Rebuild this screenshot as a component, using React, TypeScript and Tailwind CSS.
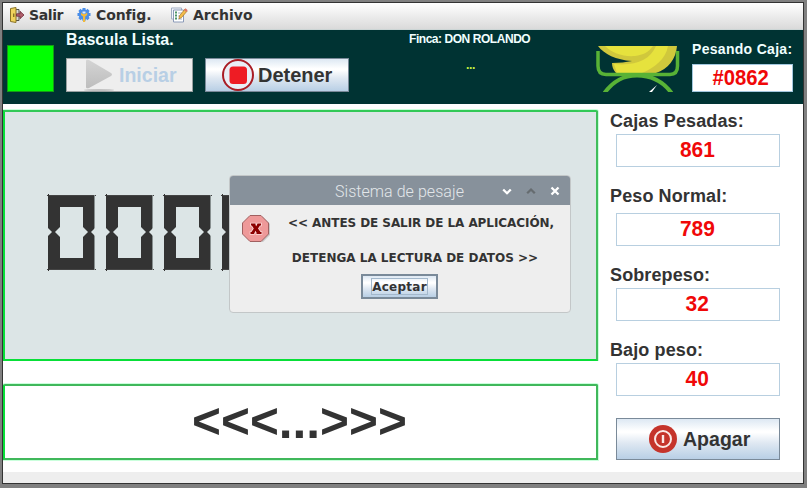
import React from "react";

const arial = "font-['Liberation_Sans',Arial,sans-serif] font-bold";
const dejavu = "font-['DejaVu_Sans',sans-serif] font-bold";
const metal =
  "bg-[linear-gradient(to_bottom,#dde8f3_0%,#ffffff_30%,#ffffff_34%,#dfe8f2_60%,#b8cfe5_100%)] border border-[#7a8a99]";

function ExitIcon() {
  return (
    <svg width="16" height="16" viewBox="0 0 16 16" className="shrink-0">
      <path d="M5 2.500h4v11H5z" fill="#d9d9d2" stroke="#55534a" />
      <path d="M.5 1.500l5.500-1v15l-5.500-1z" fill="#f0d35c" stroke="#8a7224" />
      <path d="M3.800 6.500v3.500" stroke="#5c4a10" />
      <path d="M6.500 6.800h3.500V4.300l4 3.700-4 3.700V9.200h-3.500z" fill="#b0606c" stroke="#6d2c3a" strokeWidth=".8" />
    </svg>
  );
}

function GearIcon() {
  return (
    <svg width="16" height="16" viewBox="0 0 16 16" className="shrink-0">
      <g fill="#4a8ee8">
        <circle cx="8" cy="7.500" r="5.300" />
        <path d="M6.500 1h3v13h-3zM1.500 6h13v3h-13z" />
        <path d="M6.500 1h3v13h-3zM1.500 6h13v3h-13z" transform="rotate(45 8 7.500)" />
      </g>
      <path d="M6.500 4.500h3v2h-3z" fill="#dfe9f6" />
      <path d="M5 5.500v2.500L7 9.600V15h2.200V9.600l2-1.600V5.500L9.500 7h-3z" fill="#f0b93c" />
    </svg>
  );
}

function NotesIcon() {
  return (
    <svg width="18" height="16" viewBox="0 0 18 16" className="shrink-0">
      <path d="M1.500 1h10v11h-10z" fill="#f3f6fb" stroke="#a3aec4" />
      <path d="M3.500 3h10v12h-10z" fill="#fff" stroke="#8b9ab8" />
      <path d="M5 5.500h2M5 8.500h2M5 11.500h2" stroke="#4c9468" strokeWidth="1.800" />
      <path d="M8 6h4M8 9h3M8 12h4" stroke="#a7b3c8" />
      <path d="M9 11.800l.5-3L15 2l2.200 2-5.800 6.700z" fill="#f3bd4b" stroke="#a8741f" strokeWidth=".7" />
      <path d="M14 3l1.500-1.800 2.200 2L16 5z" fill="#dd7466" />
    </svg>
  );
}

function BananaLogo() {
  return (
    <svg width="84" height="46" viewBox="0 0 84 46" className="shrink-0">
      <path d="M2 0H81C80 13 72 23 60 27H20C17 24 16 20 16 17C24 17 30 16 36 15C20 14 8 8 2 0Z" fill="#d0c83c" />
      <path d="M9 0H57C53 6 47 9 39 10C27 11 16 7 9 0Z" fill="#e6e23d" />
      <path d="M60 0H72C70 13 58 22 46 27H21L18 18C40 20 54 14 60 0Z" fill="#e6e23d" />
      <path d="M2 5V20Q2 28.500 10 28.500H74Q81.500 28.500 81.500 20V5" fill="none" stroke="#58b236" strokeWidth="3.500" />
      <path d="M8.500 47C18 34 28 29.500 41 29.500S66 34 75.500 47" fill="none" stroke="#58b236" strokeWidth="4" />
      <path d="M53 46l8-7-5 7z" fill="#fff" />
    </svg>
  );
}

function Zero() {
  return (
    <div className="relative h-[75px] w-[47px] shrink-0 border-[12px] border-[#333]">
      <i className="absolute -left-[12px] top-[21px] size-0 border-y-[4px] border-l-[4px] border-y-transparent border-l-[#dce5e6]" />
      <i className="absolute -left-[5px] top-[20px] size-0 border-y-[5px] border-r-[5px] border-y-transparent border-r-[#dce5e6]" />
      <i className="absolute -right-[5px] top-[20px] size-0 border-y-[5px] border-l-[5px] border-y-transparent border-l-[#dce5e6]" />
      <i className="absolute -left-[13px] -top-[12px] h-px w-[49px] bg-[#444]" />
      <i className="absolute -left-[13px] top-[62px] h-px w-[49px] bg-[#444]" />
      <i className="absolute -left-[12px] -top-[13px] h-[77px] w-px bg-[#333] [clip-path:polygon(0_0,100%_0,100%_20%,0_20%,0_80%,100%_80%,100%_100%,0_100%)]" />
      <i className="absolute -right-[12px] -top-[12px] h-[75px] w-px bg-[#889090]" />
      <i className="absolute -right-[12px] top-[21px] size-0 border-y-[4px] border-r-[4px] border-y-transparent border-r-[#dce5e6]" />
    </div>
  );
}

function Stat({ label, value, className }: { label: string; value: string; className: string }) {
  return (
    <div className={className}>
      <div className="h-[24px] whitespace-nowrap text-[18px] leading-[22px] tracking-[0.12px]">{label}</div>
      <div className="ml-[6px] flex h-[33px] w-[164px] items-center justify-center border border-[#b8cfe0] pb-[2px] pr-[2px] text-[22px] leading-none text-[#f00808]">
        <span className="scale-x-[.95]">{value}</span>
      </div>
    </div>
  );
}

function Dialog() {
  return (
    <div className="absolute left-[229px] top-[175px] h-[138px] w-[342px] overflow-hidden rounded-[4px] border border-[#c3c7c8] bg-[#eee]">
      <div className="-mx-px -mt-px flex h-[30px] items-center bg-[#87919b] pl-[106px]">
        <span className="w-[130px] whitespace-nowrap pt-[3px] font-['Roboto',sans-serif] text-[16px] font-light leading-none tracking-[0.05px] text-[#e3e7ea]">
          Sistema de pesaje
        </span>
        <svg width="64" height="12" viewBox="0 0 64 12" className="ml-[36px] mt-px" fill="none" strokeWidth="2.300">
          <path d="M2.200 4.500L6 8.200l3.800-3.700" stroke="#fff" />
          <path d="M26.200 8.200L30 4.500l3.800 3.700" stroke="#666c70" />
          <path d="M50.500 2.500l7 7M57.500 2.500l-7 7" stroke="#fff" />
        </svg>
      </div>
      <div className="flex">
        <svg width="34" height="34" viewBox="0 0 34 34" className="ml-[9px] mt-[7px] shrink-0">
          <path d="M12 5h12l7 7v11l-7 7H12l-7-7V12z" fill="#999" opacity=".45" />
          <path d="M11 3.500h11l7.500 7.500v11L22 29.500H11L3.500 22V11z" fill="#ee9999" stroke="#a06060" />
          <path d="M12 11.500h4.500v1.500l.8 1.200L18.500 11.500H22v2h-1l-2 3 2.500 3.500H22.500v2H17.500v-1.500l-1-1.800-1.500 3.300H11.500v-2h1l2.300-3.500-2-3H12z" fill="#8c0000" stroke="#fbd8d8" strokeWidth="1.600" paintOrder="stroke" />
        </svg>
        <div className={`${dejavu} ml-[6px] mt-[8px] w-[284px] whitespace-nowrap text-center text-[12px] leading-[20px] text-[#333]`}>
          <p className="h-[35px] tracking-[-0.07px]">&lt;&lt; ANTES DE SALIR DE LA APLICACIÓN,</p>
          <p className="-ml-[12px] h-[26px]">DETENGA LA LECTURA DE DATOS &gt;&gt;</p>
        </div>
      </div>
      <button className={`${dejavu} ${metal} ml-[131px] flex h-[25px] w-[77px] items-center justify-center border-2 text-[12px] leading-none tracking-[0.25px] text-[#333]`}>
        <span className="flex h-[17px] items-center border border-[#a3b8cc]">Aceptar</span>
      </button>
    </div>
  );
}

export default function App() {
  return (
    <div className="relative h-[488px] w-[807px] overflow-hidden bg-[#808080] pl-[2px] pt-[2px] text-[#333]">
      <div className="h-[482px] w-[802px] border border-[#333] bg-white">
        <nav className={`${dejavu} flex h-[27px] items-center border-b border-[#ccd5d5] bg-gradient-to-b from-white to-[#dadada] pb-[2px] pl-[7px] text-[14px] leading-none`}>
          <ExitIcon />
          <span className="ml-[3px] w-[47px] tracking-[-0.4px]">Salir</span>
          <GearIcon />
          <span className="ml-[4px] w-[74px] tracking-[-0.1px]">Config.</span>
          <NotesIcon />
          <span className="ml-[5px]">Archivo</span>
        </nav>

        <header className={`${arial} flex h-[74px] bg-[#003333] text-[#f0ffff]`}>
          <div className="ml-[4px] mt-[15px] h-[47px] w-[47px] border border-[#159c15] bg-[#00ff00]" />
          <div className="ml-[12px] w-[283px] shrink-0">
            <div className="h-[28px] text-[16px] leading-[20px]">Bascula Lista.</div>
            <div className="flex gap-[12px]">
              <button className="flex h-[34px] w-[127px] items-center border border-[#98a0a0] bg-[#eee] pl-[17px] text-[21px] leading-none text-[#b8cfe5]">
                <svg width="32" height="32" viewBox="0 0 32 32" className="mr-[3px] shrink-0">
                  <defs>
                    <linearGradient id="play" x1="0" y1="0" x2="0" y2="1">
                      <stop stopColor="#d4d4d4" />
                      <stop offset="1" stopColor="#bdbdbd" />
                    </linearGradient>
                  </defs>
                  <path d="M2 2Q2 0 5 1L27 14Q29 15.500 27 17L5 29Q2 30 2 28Z" fill="url(#play)" />
                  <ellipse cx="15" cy="31" rx="15" ry="1" fill="#c2c2c2" />
                </svg>
                <span className="origin-left scale-x-[.93] pb-[2px]">Iniciar</span>
              </button>
              <button className={`${metal} flex h-[34px] w-[144px] items-center pl-[16px] text-[21px] leading-none text-[#333]`}>
                <svg width="32" height="32" viewBox="0 0 32 32" className="mr-[4px] shrink-0">
                  <circle cx="16" cy="16" r="15" fill="#e9eef5" stroke="#a91d25" strokeWidth="2" />
                  <rect x="7.500" y="7.500" width="17.500" height="17.500" rx="3.500" fill="#ee1c24" />
                </svg>
                <span className="origin-left scale-x-[.95] pb-[2px]">Detener</span>
              </button>
            </div>
          </div>
          <div className="w-[247px] shrink-0 pl-[60px] text-[12px]">
            <div className="h-[25px] w-[123px] whitespace-nowrap leading-[18px] tracking-[-0.45px]">Finca: DON ROLANDO</div>
            <div className="h-[20px] w-[123px] text-center leading-[20px] tracking-[-0.4px] text-[#c8f040]">...</div>
          </div>
          <div className="mt-[16px] w-[96px] shrink-0">
            <BananaLogo />
          </div>
          <div className="w-[102px] shrink-0 whitespace-nowrap pt-[9px]">
            <div className="h-[25px] text-[14px] leading-[20px] tracking-[0.3px]">Pesando Caja:</div>
            <div className="flex h-[28px] w-[101px] items-center justify-center border border-[#a3c8df] bg-white pr-[3px] text-[22px] leading-none text-[#f00808]">
              <span className="scale-x-[.92]">#0862</span>
            </div>
          </div>
        </header>

        <main className={`${arial} flex h-[368px]`}>
          <div className="w-[607px] pt-[6px]">
            <section className="flex h-[251px] w-[595px] gap-[11px] rounded-tr-[2px] border-2 border-b-[#08df38] border-l-[#08df38] border-r-[#40bd5b] border-t-[#32c957] bg-[#dce5e6] pl-[43px] pt-[83px] shadow-[0_0_0_1px_#caffdc] [clip-path:inset(-1px_-1px_0_0)]" aria-label="0000">
              <Zero />
              <Zero />
              <Zero />
              <Zero />
            </section>
            <section className="mt-[23px] flex h-[76px] w-[595px] items-center justify-center rounded-tl-[2px] rounded-tr-[2px] border-2 border-[#40b85b] border-l-[#08df38] bg-white pb-[3px] pr-[2px] text-[50px] leading-none shadow-[0_0_0_1px_#caffdc] [clip-path:inset(-1px_-1px_-1px_0)]">
              <span className="scale-x-[.99]">&lt;&lt;&lt;...&gt;&gt;&gt;</span>
            </section>
          </div>
          <aside className="pt-[6px]">
            <Stat label="Cajas Pesadas:" value="861" className="h-[75px]" />
            <Stat label="Peso Normal:" value="789" className="h-[79px] [&>div:first-child]:h-[28px]" />
            <Stat label="Sobrepeso:" value="32" className="h-[75px]" />
            <Stat label="Bajo peso:" value="40" className="h-[79px]" />
            <button className={`${metal} ml-[6px] flex h-[42px] w-[164px] items-center pl-[32px] text-[21px] leading-none`}>
              <svg width="28" height="28" viewBox="0 0 28 28" className="mr-[6px] shrink-0">
                <circle cx="14" cy="14" r="14" fill="#c5342b" />
                <circle cx="14" cy="14" r="8" fill="none" stroke="#fbe9e6" strokeWidth="2" />
                <rect x="12.800" y="10" width="2.400" height="8" fill="#fbe9e6" />
              </svg>
              <span className="origin-left scale-x-[.93] pb-[2px]">Apagar</span>
            </button>
          </aside>
        </main>
        <footer className="h-[11px] bg-[#eee]" />
      </div>
      <Dialog />
    </div>
  );
}
